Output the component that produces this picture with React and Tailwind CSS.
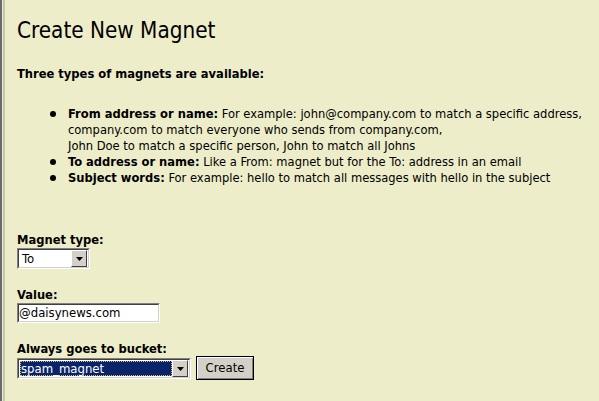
import React from 'react';

function Arrow() {
  return (
    <span className="flex h-[17px] w-[16px] items-center justify-center bg-[#d4d0c8] border border-t-[#ffffff] border-l-[#ffffff] border-r-[#404040] border-b-[#404040]">
      <svg width="7" height="4" viewBox="0 0 7 4">
        <path d="M0 0h7L3.5 4z" fill="#000" />
      </svg>
    </span>
  );
}

function Combo({ width, value, selected }) {
  return (
    <div
      className={`flex h-[21px] items-center border border-t-[#808080] border-l-[#808080] border-r-[#ffffff] border-b-[#ffffff] bg-white ${width}`}
    >
      <div className="flex h-full flex-1 items-center border border-t-[#404040] border-l-[#404040] border-r-[#d4d0c8] border-b-[#d4d0c8] pr-[1px]">
        <span
          className={
            selected
              ? 'ml-[1px] flex h-[15px] flex-1 items-center border border-dotted border-[#e0c060] bg-[#0a246a] text-[13px] text-white'
              : 'ml-[3px] flex-1 text-[13px] text-black'
          }
        >
          {value}
        </span>
        <Arrow />
      </div>
    </div>
  );
}

function Item({ children }) {
  return (
    <li className="flex">
      <span className="w-[18px] shrink-0 pt-[5px]">
        <span className="block h-[6px] w-[6px] rounded-full bg-black" />
      </span>
      <div>{children}</div>
    </li>
  );
}

export default function App() {
  return (
    <div className="flex h-[401px] w-[599px] overflow-hidden bg-[#ededca] font-['DejaVu_Sans_Condensed','DejaVu_Sans',sans-serif] text-[12.8px] text-black">
      <div className="w-[2px] bg-[#6b6b6b]" />
      <div className="w-[1px] bg-[#e8e8e8]" />
      <div className="w-[2px] bg-[#c9c9a0]" />
      <div className="flex-1 pl-[12px]">
        <h1 className="mt-[17px] text-[22.3px] leading-[26px] font-normal">Create New Magnet</h1>
        <p className="mt-[23px] font-bold leading-[16px]">Three types of magnets are available:</p>
        <ul className="mt-[24px] pl-[33px] leading-[16px]">
          <Item>
            <b>From address or name:</b> For example: john@company.com to match a specific address,
            <br />
            company.com to match everyone who sends from company.com,
            <br />
            John Doe to match a specific person, John to match all Johns
          </Item>
          <Item>
            <b>To address or name:</b> Like a From: magnet but for the To: address in an email
          </Item>
          <Item>
            <b>Subject words:</b> For example: hello to match all messages with hello in the subject
          </Item>
        </ul>
        <div className="mt-[46px] flex flex-col">
          <label className="font-bold leading-[16px]">Magnet type:</label>
          <div>
            <Combo width="w-[73px]" value="To" />
          </div>
          <label className="mt-[18px] font-bold leading-[16px]">Value:</label>
          <div className="flex h-[20px] w-[143px] items-center border border-t-[#808080] border-l-[#808080] border-r-[#ffffff] border-b-[#ffffff] bg-white">
            <div className="flex h-full w-full items-center border border-t-[#404040] border-l-[#404040] border-r-[#d4d0c8] border-b-[#d4d0c8] text-[13px]">
              @daisynews.com
            </div>
          </div>
          <label className="mt-[18px] font-bold leading-[16px]">Always goes to bucket:</label>
          <div className="mt-[-1px] flex items-start gap-[5px]">
            <div className="mt-[2px]">
              <Combo width="w-[174px]" value="spam_magnet" selected />
            </div>
            <button className="h-[24px] w-[58px] border border-black bg-[#d4d0c8] text-[13px] shadow-[inset_1px_1px_0_#ffffff,inset_-1px_-1px_0_#808080]">
              Create
            </button>
          </div>
        </div>
      </div>
    </div>
  );
}
